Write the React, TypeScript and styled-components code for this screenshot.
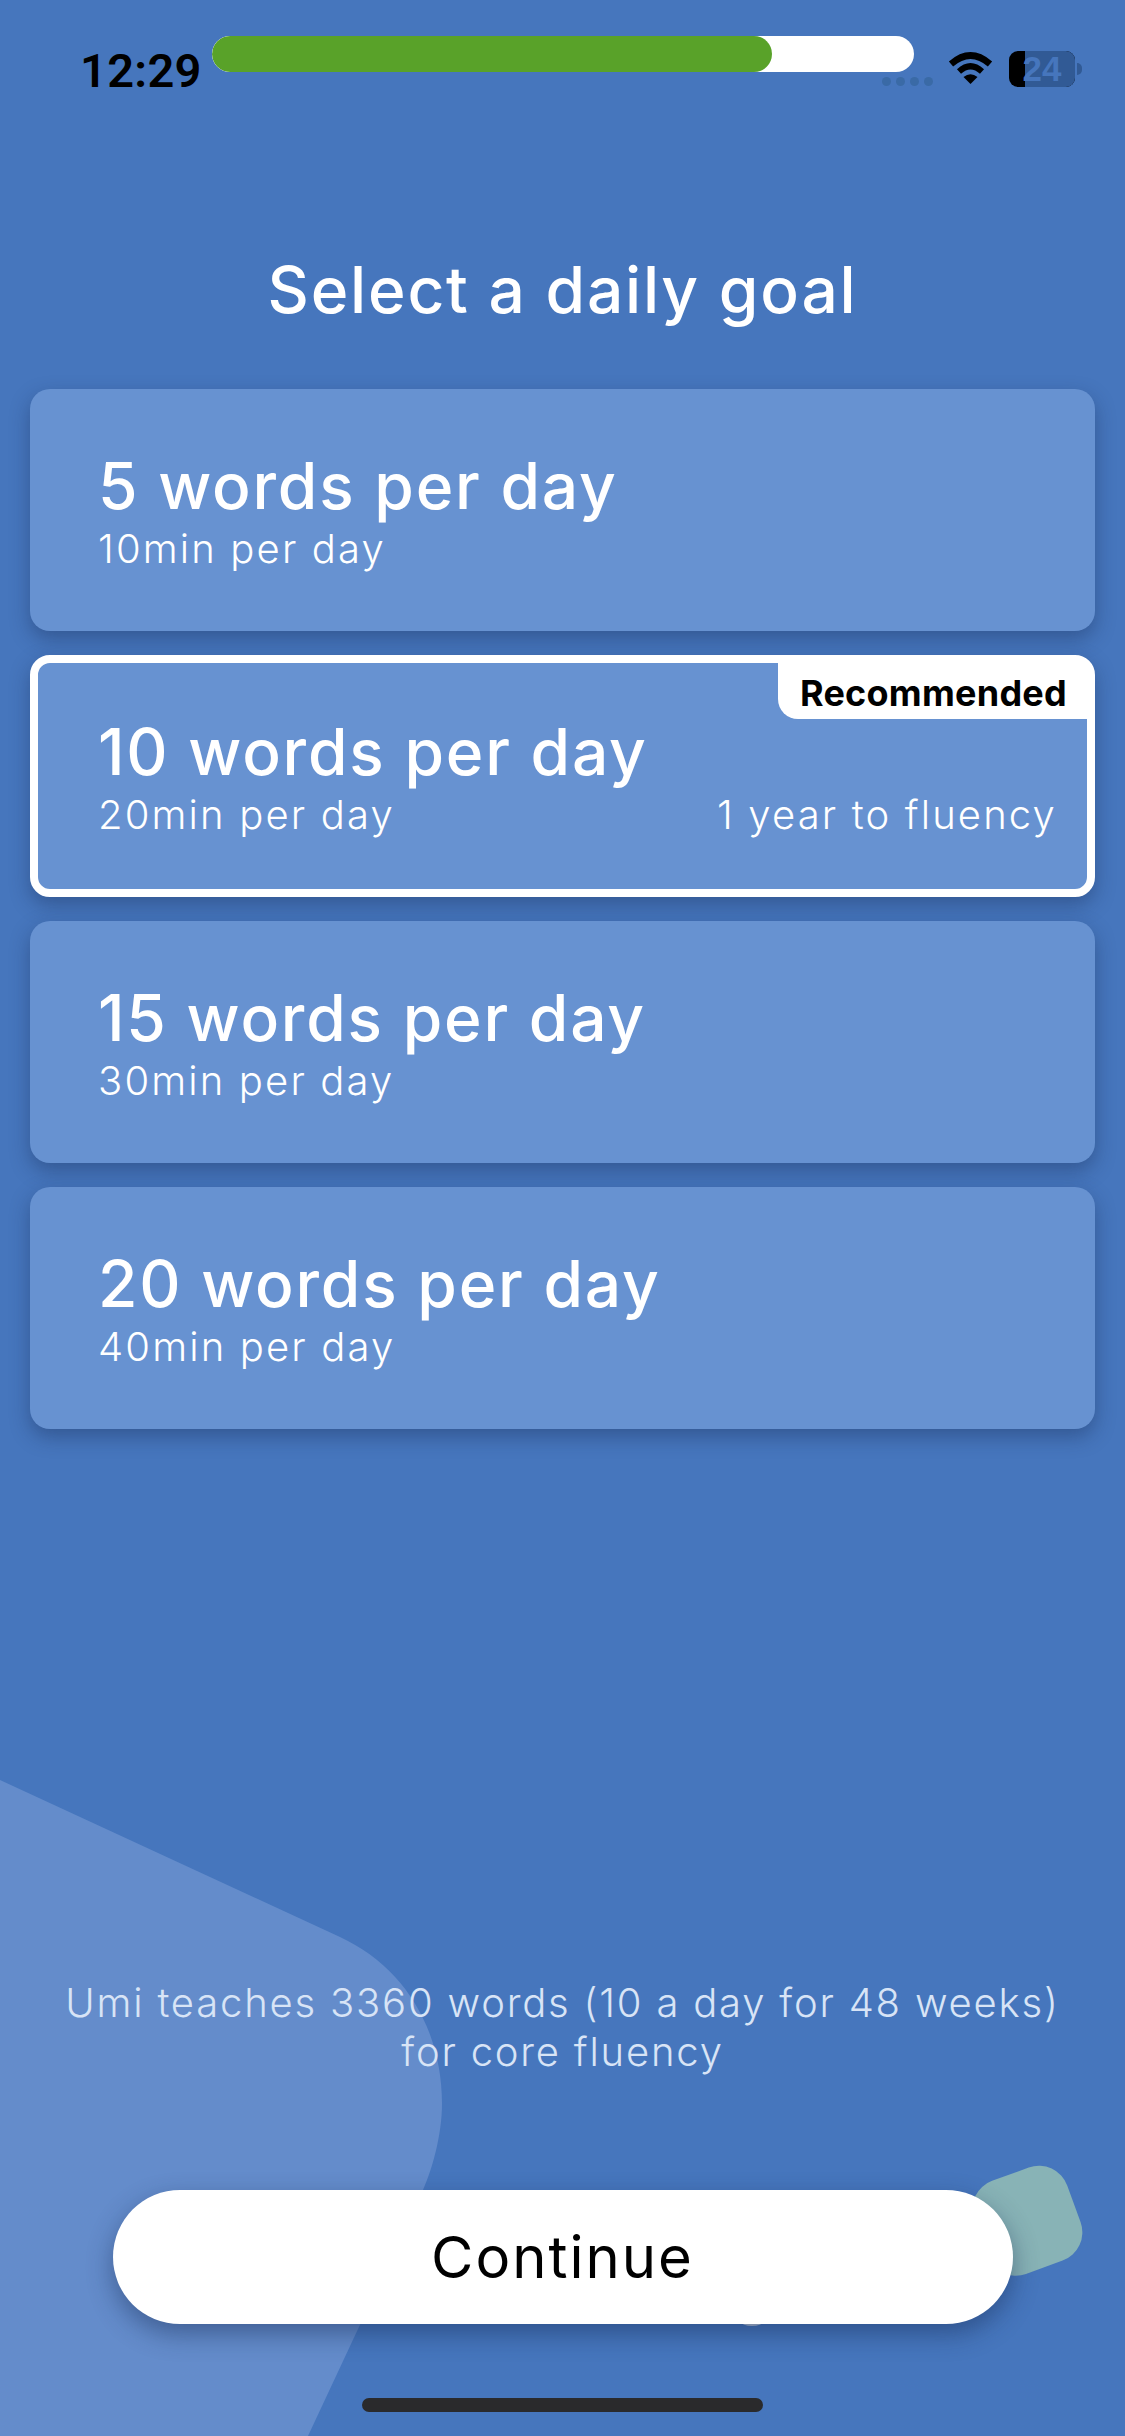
import React from 'react'
import styled, { createGlobalStyle } from 'styled-components'

const GlobalStyle = createGlobalStyle`
  html, body {
    margin: 0;
    padding: 0;
    background: #4676bd;
  }
  * {
    box-sizing: border-box;
  }
`

const Screen = styled.div`
  position: relative;
  width: 1125px;
  height: 2436px;
  overflow: hidden;
  display: flex;
  flex-direction: column;
  background: #4676bd;
  font-family: Inter, "Liberation Sans", sans-serif;
  color: #fff;
`

const Backdrop = styled.svg`
  position: absolute;
  left: 0;
  top: 0;
  width: 1125px;
  height: 2436px;
`

const TopBar = styled.header`
  position: relative;
  display: flex;
  align-items: flex-start;
  padding: 36px 0 0 80px;
  height: 100px;
`

const Time = styled.div`
  width: 132px;
  margin-top: 10px;
  font-family: Roboto, "Liberation Sans", sans-serif;
  font-size: 47px;
  line-height: 50px;
  font-weight: 600;
  letter-spacing: 0.3px;
  color: #000;
`

const Progress = styled.div`
  width: 702px;
  height: 36px;
  border-radius: 18px;
  background: #fff;
  overflow: hidden;
`

const ProgressFill = styled.div`
  height: 100%;
  border-radius: 18px;
  background: #59a229;
`

const StatusIcons = styled.div`
  position: relative;
  display: flex;
  align-items: flex-start;
  gap: 16px;
  margin: 15px 0 0 34px;
`

const SignalDots = styled.div`
  position: absolute;
  left: -66px;
  top: 26px;
  display: flex;
  gap: 5px;
`

const SignalDot = styled.span`
  width: 9px;
  height: 9px;
  border-radius: 50%;
  background: #3a6aa6;
`

const Battery = styled.div`
  position: relative;
  width: 66px;
  height: 36px;
  border-radius: 9px;
  background: #000;
  overflow: visible;
`

const BatteryShade = styled.div`
  position: absolute;
  left: 16px;
  right: 0;
  top: 0;
  bottom: 0;
  border-radius: 0 9px 9px 0;
  background: #315a95;
`

const BatteryLevel = styled.div`
  position: absolute;
  inset: 0;
  text-align: center;
  font-family: "Liberation Sans", Arial, sans-serif;
  font-size: 35px;
  line-height: 36px;
  font-weight: 700;
  color: #4676bd;
`

const BatteryCap = styled.div`
  position: absolute;
  right: -7px;
  top: 12px;
  width: 5px;
  height: 12px;
  border-radius: 0 5px 5px 0;
  background: #315a95;
`

const Title = styled.h1`
  position: relative;
  margin: 150px 0 0;
  height: 80px;
  text-align: center;
  font-size: 64px;
  line-height: 80px;
  font-weight: 500;
  letter-spacing: 1.8px;
`

const GoalList = styled.div`
  position: relative;
  display: flex;
  flex-direction: column;
  gap: 24px;
  margin: 59px 30px 0;
`

const GoalCard = styled.div<{ $selected?: boolean }>`
  position: relative;
  height: 242px;
  display: flex;
  flex-direction: column;
  padding: ${(p) => (p.$selected ? '53px 30px 0 60px' : '61px 38px 0 68px')};
  border-radius: 20px;
  background: #6792d1;
  border: ${(p) => (p.$selected ? '8px solid #fff' : 'none')};
  box-shadow: 0 8px 20px rgba(20, 40, 80, 0.38);
`

const GoalName = styled.div`
  font-size: 64px;
  line-height: 72px;
  font-weight: 500;
  letter-spacing: 1.8px;
`

const GoalMeta = styled.div`
  display: flex;
  justify-content: space-between;
  margin-top: 4px;
  font-size: 40px;
  line-height: 46px;
  font-weight: 300;
  letter-spacing: 2.15px;
`

const Badge = styled.div`
  position: absolute;
  top: 0;
  right: 0;
  padding: 10px 20px 0 22px;
  height: 56px;
  border-bottom-left-radius: 20px;
  background: #fff;
  color: #000;
  font-size: 36px;
  line-height: 40px;
  font-weight: 700;
  letter-spacing: 0.25px;
`

const Note = styled.p`
  position: relative;
  margin: auto 0 0;
  text-align: center;
  font-size: 40px;
  line-height: 49px;
  font-weight: 350;
  letter-spacing: 1.8px;
  color: #d8e4f6;
`

const ContinueButton = styled.button`
  position: relative;
  align-self: center;
  width: 900px;
  height: 134px;
  margin: 114px 0 112px;
  border: none;
  border-radius: 67px;
  background: #fff;
  color: #000;
  font-family: inherit;
  font-size: 58px;
  font-weight: 400;
  letter-spacing: 2px;
  box-shadow: 0 10px 26px rgba(20, 40, 80, 0.45);
`

const HomeBar = styled.div`
  position: absolute;
  left: 362px;
  bottom: 24px;
  width: 401px;
  height: 14px;
  border-radius: 7px;
  background: #2a2a2c;
`

const goals = [
  { name: '5 words per day', time: '10min per day' },
  { name: '10 words per day', time: '20min per day', selected: true, extra: '1 year to fluency' },
  { name: '15 words per day', time: '30min per day' },
  { name: '20 words per day', time: '40min per day' },
]

const App = () => {
  return (
    <Screen>
      <GlobalStyle />
      <Backdrop viewBox="0 0 1125 2436">
        <path
          d="M0 1780 L340 1937 C405 1967 442 2030 442 2104 C442 2135 432 2170 423 2190 L308 2436 L0 2436 Z"
          fill="#648ccb"
        />
        <rect x="978" y="2171" width="99" height="99" rx="30" fill="#88b3b6" transform="rotate(-20 1028 2221)" />
        <ellipse cx="752" cy="2322" rx="11" ry="4" fill="#b4c2d8" />
      </Backdrop>

      <TopBar>
        <Time>12:29</Time>
        <Progress>
          <ProgressFill style={{ width: `${(560 / 702) * 100}%` }} />
        </Progress>
        <StatusIcons>
          <SignalDots>
            <SignalDot />
            <SignalDot />
            <SignalDot />
            <SignalDot />
          </SignalDots>
          <svg width="45" height="33" viewBox="0 0 45 33">
            <path d="M3 13 Q22.5 -4 42 13" fill="none" stroke="#000" strokeWidth="6.5" />
            <path d="M11 20.5 Q22.5 10 34 20.5" fill="none" stroke="#000" strokeWidth="6" />
            <path d="M15.5 26 Q22.5 20.5 29.5 26 L22.5 33 Z" fill="#000" />
          </svg>
          <Battery>
            <BatteryShade />
            <BatteryLevel>24</BatteryLevel>
            <BatteryCap />
          </Battery>
        </StatusIcons>
      </TopBar>

      <Title>Select a daily goal</Title>

      <GoalList>
        {goals.map((goal) => (
          <GoalCard key={goal.name} $selected={goal.selected}>
            {goal.selected && <Badge>Recommended</Badge>}
            <GoalName>{goal.name}</GoalName>
            <GoalMeta>
              <span>{goal.time}</span>
              {goal.extra && <span>{goal.extra}</span>}
            </GoalMeta>
          </GoalCard>
        ))}
      </GoalList>

      <Note>
        Umi teaches 3360 words (10 a day for 48 weeks)
        <br />
        for core fluency
      </Note>

      <ContinueButton>Continue</ContinueButton>
      <HomeBar />
    </Screen>
  )
}

export default App
